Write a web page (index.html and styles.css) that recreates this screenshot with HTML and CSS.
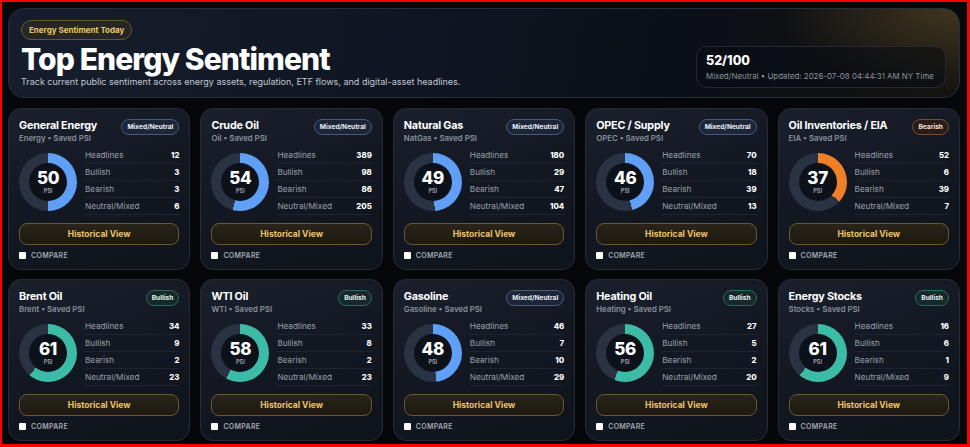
FILE: index.html
```html
<!DOCTYPE html>
<html lang="en">
<head>
<meta charset="utf-8">
<title>Top Energy Sentiment</title>
<link rel="stylesheet" href="styles.css">
</head>
<body>
<main class="page">
  <section class="hero">
    <div class="hero-left">
      <span class="hero-badge">Energy Sentiment Today</span>
      <h1 class="hero-title">Top Energy Sentiment</h1>
      <p class="hero-sub">Track current public sentiment across energy assets, regulation, ETF flows, and digital-asset headlines.</p>
    </div>
    <div class="score-box">
      <div class="score-num">52/100</div>
      <div class="score-meta">Mixed/Neutral • Updated: 2026-07-08 04:44:31 AM NY Time</div>
    </div>
  </section>

  <section class="grid" id="grid"></section>
</main>
<script src="app.js"></script>
</body>
</html>
```
FILE: app.js
```js
const data = [
  ["General Energy","Energy","Mixed/Neutral","mixed",50,12,3,3,6],
  ["Crude Oil","Oil","Mixed/Neutral","mixed",54,389,98,86,205],
  ["Natural Gas","NatGas","Mixed/Neutral","mixed",49,180,29,47,104],
  ["OPEC / Supply","OPEC","Mixed/Neutral","mixed",46,70,18,39,13],
  ["Oil Inventories / EIA","EIA","Bearish","bear",37,52,6,39,7],
  ["Brent Oil","Brent","Bullish","bull",61,34,9,2,23],
  ["WTI Oil","WTI","Bullish","bull",58,33,8,2,23],
  ["Gasoline","Gasoline","Mixed/Neutral","mixed",48,46,7,10,29],
  ["Heating Oil","Heating","Bullish","bull",56,27,5,2,20],
  ["Energy Stocks","Stocks","Bullish","bull",61,16,6,1,9]
];
const grid = document.getElementById("grid");
grid.innerHTML = data.map(d => `
  <article class="card">
    <header class="card-head">
      <div class="card-titles">
        <h2 class="card-title">${d[0]}</h2>
        <div class="card-sub">${d[1]} • Saved PSI</div>
      </div>
      <span class="tag tag-${d[3]}">${d[2]}</span>
    </header>
    <div class="card-body">
      <div class="donut donut-${d[3]}" style="--p:${d[4]}">
        <div class="donut-inner">
          <span class="donut-num">${d[4]}</span>
          <span class="donut-lbl">PSI</span>
        </div>
      </div>
      <dl class="stats">
        <div class="stat"><dt>Headlines</dt><dd>${d[5]}</dd></div>
        <div class="stat"><dt>Bullish</dt><dd>${d[6]}</dd></div>
        <div class="stat"><dt>Bearish</dt><dd>${d[7]}</dd></div>
        <div class="stat"><dt>Neutral/Mixed</dt><dd>${d[8]}</dd></div>
      </dl>
    </div>
    <button class="hist-btn">Historical View</button>
    <label class="compare"><span class="box"></span>COMPARE</label>
  </article>`).join("");
```
FILE: styles.css
```css
* { box-sizing: border-box; }
html, body { margin: 0; height: 100%; }
body {
  background: #05070b;
  font-family: Inter, "Noto Sans", sans-serif;
  color: #fff;
  border: 2px solid #ff0000;
  border-right-width: 3px;
  border-bottom-width: 3px;
  overflow: hidden;
}
.page {
  padding: 6px 7px 6px 6px;
  display: flex;
  flex-direction: column;
  gap: 10px;
}
.hero {
  height: 90px;
  flex: none;
  border: 1px solid #262e3c;
  border-radius: 16px;
  background:
    radial-gradient(ellipse 260px 120px at 100% 0%, rgba(120, 96, 50, 0.45), rgba(120,96,50,0) 70%),
    linear-gradient(100deg, #161e2d 0%, #0f1521 45%, #0b0f17 70%, #14130f 100%);
  display: flex;
  align-items: flex-end;
  justify-content: space-between;
  padding: 9px 13px 9px 12px;
}
.hero-left { display: flex; flex-direction: column; align-items: flex-start; }
.hero-badge {
  font-size: 8px;
  font-weight: 700;
  color: #e9c46e;
  border: 1px solid #6a5630;
  background: rgba(70, 56, 30, 0.35);
  border-radius: 999px;
  padding: 4px 7px;
  line-height: 10px;
}
.hero-title {
  margin: 3px 0 0;
  font-size: 30px;
  line-height: 32px;
  font-weight: 800;
  letter-spacing: -0.9px;
}
.hero-sub {
  margin: 1px 0 0;
  font-size: 9px;
  color: #c2c8d2;
  line-height: 12px;
}
.score-box {
  width: 250px;
  height: 42px;
  border: 1px solid #232a36;
  border-radius: 11px;
  background: rgba(10, 13, 20, 0.55);
  padding: 6px 9px;
}
.score-num { font-size: 12.5px; font-weight: 800; line-height: 15px; }
.score-meta { font-size: 7.9px; color: #8d939d; margin-top: 3px; line-height: 10px; white-space: nowrap; }

.grid {
  display: grid;
  grid-template-columns: repeat(5, 1fr);
  grid-auto-rows: 162px;
  gap: 9px 10px;
}
.card {
  border: 1px solid #262c37;
  border-radius: 13px;
  background: linear-gradient(160deg, #1b212c 0%, #131823 45%, #0f131b 100%);
  padding: 10px 10px 0 10px;
  display: flex;
  flex-direction: column;
}
.card-head { display: flex; justify-content: space-between; align-items: flex-start; }
.card-title { margin: 0; font-size: 10.8px; font-weight: 700; line-height: 14px; letter-spacing: -0.2px; }
.card-sub { font-size: 7.8px; color: #8a909b; font-weight: 600; line-height: 10px; margin-top: 0; }
.tag {
  font-size: 6.6px;
  font-weight: 700;
  border-radius: 999px;
  padding: 3px 5px;
  line-height: 8px;
  white-space: nowrap;
}
.tag-mixed { border: 1px solid #4a5a7a; background: #1c2638; color: #e7ecf5; }
.tag-bear  { border: 1px solid #7a4a33; background: #2a1c17; color: #f1e2d8; }
.tag-bull  { border: 1px solid #2b6b5a; background: #15292a; color: #e2f2ec; }

.card-body { display: flex; align-items: center; gap: 8px; margin-top: 4px; }
.donut {
  width: 58px; height: 58px; border-radius: 50%;
  flex: none;
  display: flex; align-items: center; justify-content: center;
  margin-top: 2px;
}
.donut-mixed { background: conic-gradient(#5f9ff5 calc(var(--p) * 1%), #2a3344 0); }
.donut-bear  { background: conic-gradient(#ee8128 calc(var(--p) * 1%), #2a3344 0); }
.donut-bull  { background: conic-gradient(#3cbba6 calc(var(--p) * 1%), #2a3344 0); }
.donut-inner {
  width: 38px; height: 38px; border-radius: 50%;
  background: #0d111a;
  display: flex; flex-direction: column; align-items: center; justify-content: center;
}
.donut-num { font-size: 17px; font-weight: 800; line-height: 17px; letter-spacing: -0.3px; }
.donut-lbl { font-size: 5.5px; color: #aab0ba; font-weight: 600; line-height: 7px; margin-top: 1px; }

.stats { flex: 1; margin: 0; }
.stat {
  display: flex; justify-content: space-between; align-items: center;
  height: 17px;
  border-bottom: 1px solid #1f2530;
  font-size: 8.2px;
}
.stat dt { color: #9aa0aa; }
.stat dd { margin: 0; font-weight: 800; color: #fff; font-size: 7.8px; }

.hist-btn {
  margin-top: 8px;
  height: 22px;
  border-radius: 8px;
  border: 1px solid #6b5934;
  background: linear-gradient(180deg, #2a2418 0%, #1d1912 100%);
  color: #ecc46a;
  font-family: inherit;
  font-size: 8.5px;
  font-weight: 700;
  padding: 0;
}
.compare {
  display: flex; align-items: center; gap: 5px;
  margin-top: 6px;
  font-size: 7px;
  font-weight: 600;
  color: #a3a9b2;
  letter-spacing: 0.3px;
}
.box { width: 7px; height: 7px; background: #fff; border-radius: 1px; }
```
